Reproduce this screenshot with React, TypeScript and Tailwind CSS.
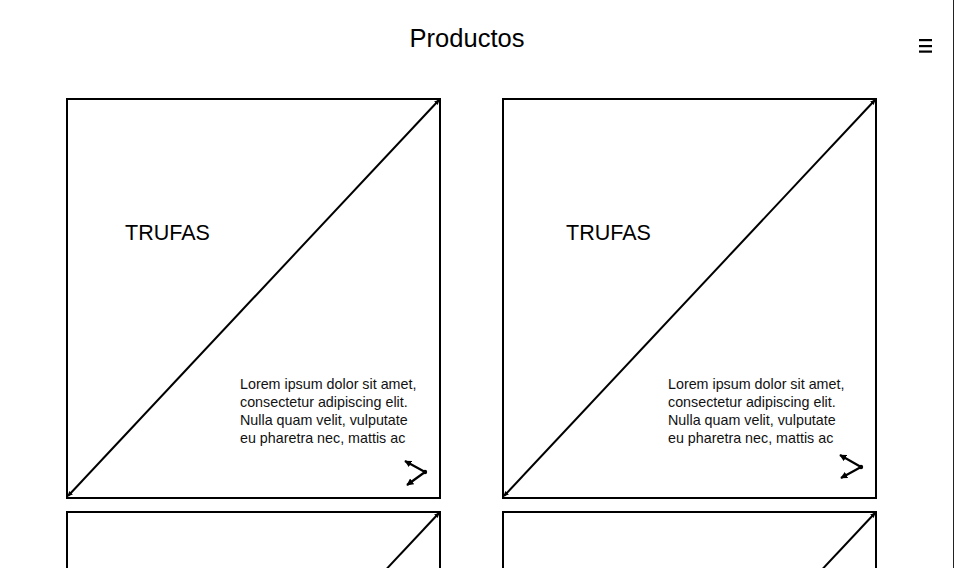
import type { ReactNode } from "react";

type CardProps = {
  titleLeft: string;
  textLeft: string;
  iconTop: string;
  iconLeft: string;
  icon: string;
  id: string;
};

function ArrowDefs({ id, size }: { id: string; size: number }) {
  return (
    <defs>
      <marker
        id={id}
        viewBox="0 0 10 10"
        refX="9"
        refY="5"
        markerWidth={size}
        markerHeight={size}
        markerUnits="userSpaceOnUse"
        orient="auto-start-reverse"
      >
        <path d="M0 0 L10 5 L0 10 z" fill="#000" />
      </marker>
    </defs>
  );
}

function Card({ titleLeft, textLeft, iconTop, iconLeft, icon, id }: CardProps) {
  const vertex = icon.split(" ")[1].split(",");
  return (
    <div className="relative h-[401px] w-[375px] border-2 border-black bg-white">
      <svg
        className="pointer-events-none absolute -inset-[2px]"
        width="375"
        height="401"
        viewBox="0 0 375 401"
      >
        <ArrowDefs id={`d-${id}`} size={5} />
        <line
          x1="2"
          y1="398"
          x2="373"
          y2="2"
          stroke="#000"
          strokeWidth="2"
          markerStart={`url(#d-${id})`}
          markerEnd={`url(#d-${id})`}
        />
      </svg>
      <div className="relative flex flex-col items-start pt-[121px]">
        <h2 className={`text-[21.5px] leading-[24px] text-black ${titleLeft}`}>TRUFAS</h2>
        <p className={`mt-[130px] text-[14.3px] leading-[18px] text-[#111] ${textLeft}`}>
          Lorem ipsum dolor sit amet,
          <br />
          consectetur adipiscing elit.
          <br />
          Nulla quam velit, vulputate
          <br />
          eu pharetra nec, mattis ac
        </p>
        <svg className={`${iconTop} ${iconLeft}`} width="28" height="30" viewBox="0 0 28 30">
          <ArrowDefs id={`i-${id}`} size={7} />
          <polyline
            points={icon}
            fill="none"
            stroke="#000"
            strokeWidth="2.2"
            strokeLinejoin="round"
            markerStart={`url(#i-${id})`}
            markerEnd={`url(#i-${id})`}
          />
          <circle cx={vertex[0]} cy={vertex[1]} r="2.2" fill="#000" />
        </svg>
      </div>
    </div>
  );
}

function Header(): ReactNode {
  return (
    <header className="flex h-[52px] items-start">
      <div className="flex-1 pl-[15px] pt-[24px] text-center text-[25.5px] leading-[28px] text-black">
        Productos
      </div>
      <svg className="mr-[21px] mt-[39px]" width="13" height="14" viewBox="0 0 13 14">
        <rect x="0" y="0" width="13" height="2.2" fill="#000" />
        <rect x="0" y="6" width="13" height="2.2" fill="#000" />
        <rect x="0" y="11.5" width="13" height="2.2" fill="#000" />
      </svg>
    </header>
  );
}

export default function App() {
  return (
    <div className="h-[568px] w-[954px] overflow-hidden border-r border-[#222] bg-white font-['Liberation_Sans',Arial,sans-serif]">
      <Header />
      <main className="mt-[46px] grid grid-cols-[375px_375px] gap-x-[61px] gap-y-[12px] pl-[66px]">
        <Card
          id="a"
          titleLeft="ml-[57px]"
          textLeft="ml-[172px]"
          iconTop="mt-[11px]"
          iconLeft="ml-[334px]"
          icon="3,3 23,14 5,27"
        />
        <Card
          id="b"
          titleLeft="ml-[62px]"
          textLeft="ml-[164px]"
          iconTop="mt-[5px]"
          iconLeft="ml-[333px]"
          icon="3,3 24,15 4,26"
        />
        <Card
          id="c"
          titleLeft="ml-[57px]"
          textLeft="ml-[172px]"
          iconTop="mt-[11px]"
          iconLeft="ml-[334px]"
          icon="3,3 23,14 5,27"
        />
        <Card
          id="d"
          titleLeft="ml-[62px]"
          textLeft="ml-[164px]"
          iconTop="mt-[5px]"
          iconLeft="ml-[333px]"
          icon="3,3 24,15 4,26"
        />
      </main>
    </div>
  );
}
